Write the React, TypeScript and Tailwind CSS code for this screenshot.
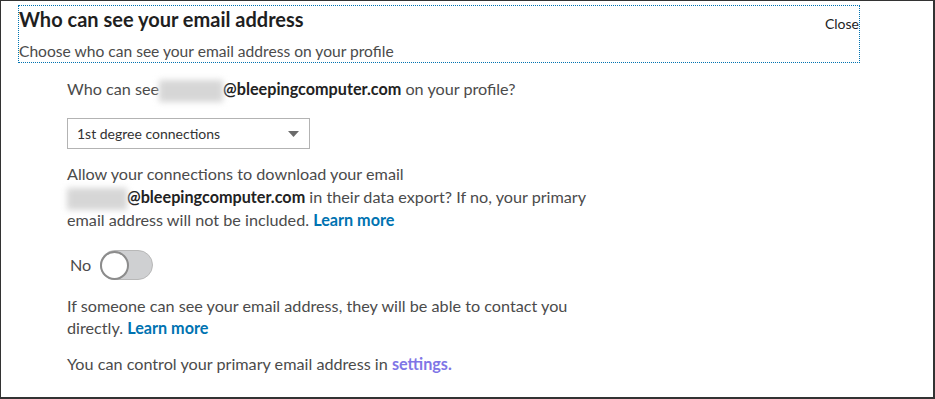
import React from 'react';

function Blur({ w }: { w: number }) {
  // stand-in for the blurred-out part of the address
  return (
    <span className="relative inline-block align-middle" style={{ width: w, height: 18 }}>
      <span className="absolute inset-x-0 -inset-y-[2px] bg-[#d6d6d6] blur-[3px]" />
    </span>
  );
}

export default function App() {
  return (
    <div className="w-[935px] h-[399px] overflow-hidden bg-white border-[#333] border-t border-l border-r-2 border-b-2 font-['Lato',sans-serif] text-[#4b4b4b]">
      {/* Header */}
      <div className="ml-[17px] mt-[4px] w-[842px] h-[58px] border border-dotted border-[#0073b1] flex justify-between">
        <div>
          <h2 className="pt-[1px] text-[20px] leading-[24px] font-bold text-[#1f1f1f]">Who can see your email address</h2>
          <p className="mt-[10px] text-[15.6px] leading-[20px] text-[#4b4b4b]">Choose who can see your email address on your profile</p>
        </div>
        <button className="self-start mt-[8px] text-[14px] leading-[20px] text-[#222]">Close</button>
      </div>

      {/* Body */}
      <div className="pl-[66px] text-[16.2px] leading-[22px]">
        <p className="mt-[15px]">
          Who can see<Blur w={64} /><span className="font-bold text-[#222]">@bleepingcomputer.com</span> on your profile?
        </p>

        <div className="mt-[18px] w-[243px] h-[31px] border border-[#b3b3b3] flex items-center justify-between pl-[9px] pr-[10px]">
          <span className="text-[14px] text-[#333]">1st degree connections</span>
          <svg width="11" height="6" viewBox="0 0 11 6">
            <path d="M0 0h11L5.5 6z" fill="#6b6b6b" />
          </svg>
        </div>

        <p className="mt-[13px] w-[530px] leading-[23px]">
          Allow your connections to download your email <span className="whitespace-nowrap"><Blur w={60} /><span className="font-bold text-[#222]">@bleepingcomputer.com</span></span> in their data export? If no, your primary email address will not be included.{' '}
          <a className="font-bold text-[#0073b1]">Learn more</a>
        </p>

        <div className="mt-[19px] flex items-center gap-[9px] pl-[3px]">
          <span>No</span>
          <div className="w-[53px] h-[30px] rounded-full bg-[#cfd0d2] border border-[#b8b8b8] flex items-center">
            <div className="w-[29px] h-[29px] -ml-[1px] rounded-full bg-white border-2 border-[#8c8c8c]" />
          </div>
        </div>

        <p className="mt-[15px] w-[530px]">
          If someone can see your email address, they will be able to contact you directly.{' '}
          <a className="font-bold text-[#0073b1]">Learn more</a>
        </p>

        <p className="mt-[14px]">
          You can control your primary email address in <a className="font-bold text-[#8075e6]">settings.</a>
        </p>
      </div>
    </div>
  );
}
